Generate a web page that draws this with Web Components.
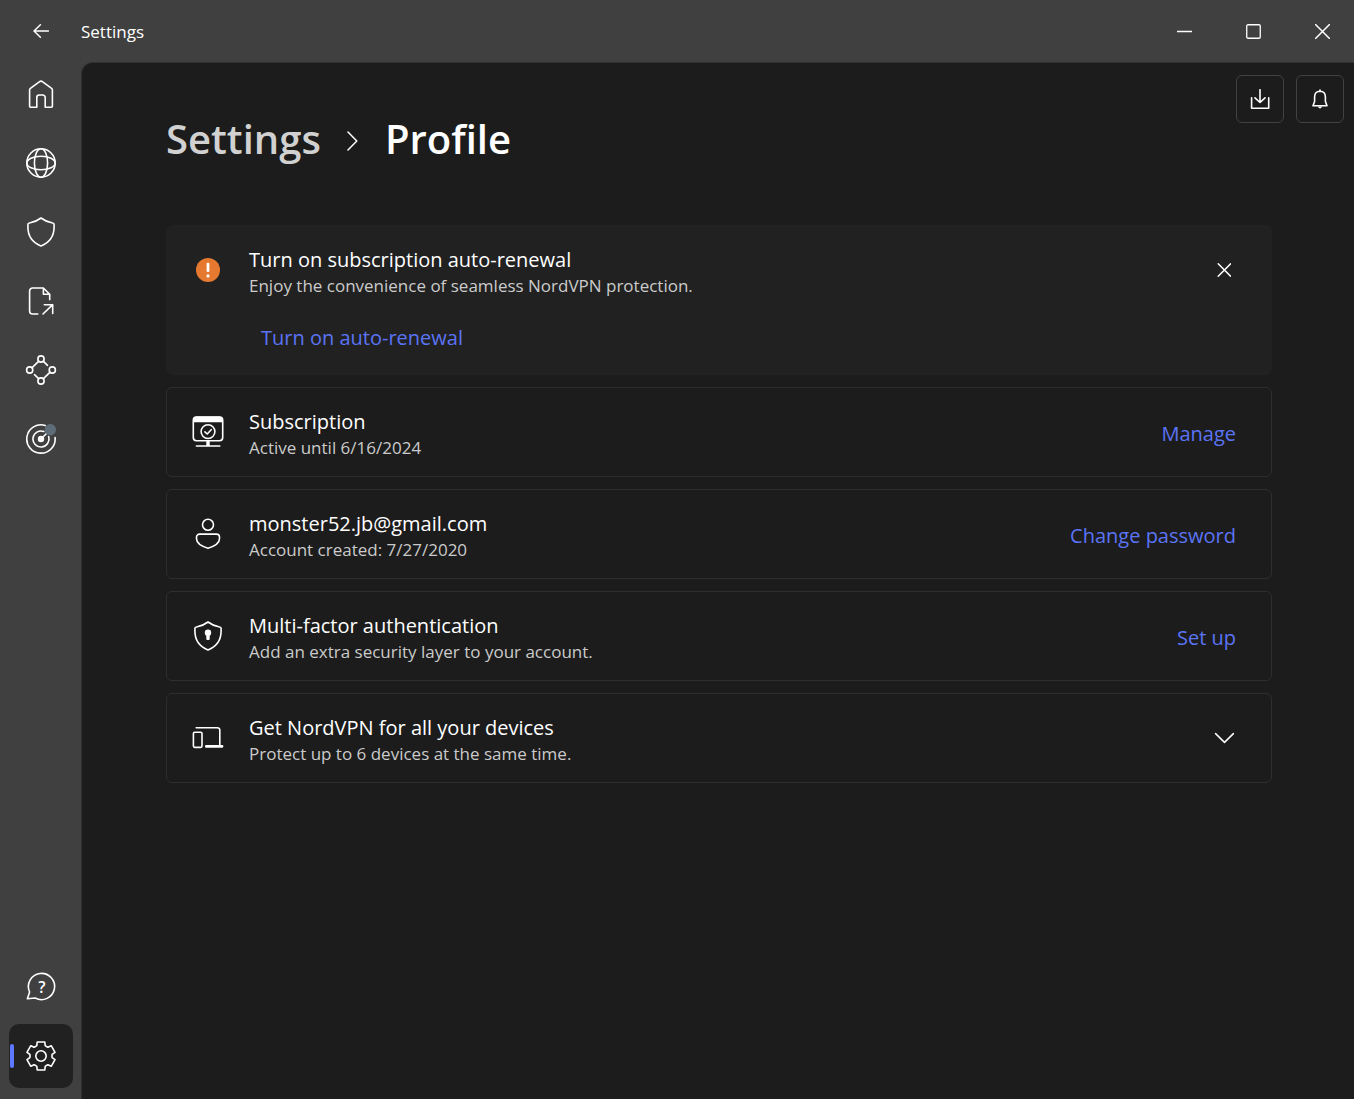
<!DOCTYPE html>
<html lang="en">
<head>
<meta charset="utf-8">
<title>Settings</title>
<style>
  html, body { margin: 0; height: 100%; }
  body {
    --chrome: #404040;
    --surface: #1c1c1c;
    --raised: #212121;
    --line: #2e2e2e;
    --accent: #5b74f5;
    --muted: #cbcbcb;
    background: var(--chrome);
    color: #fff;
    font-family: "Open Sans", "Noto Sans", sans-serif;
    font-size: 20px;
    line-height: 26px;
  }
</style>
</head>
<body>
<app-window>
  <title-bar slot="title">Settings</title-bar>

  <nav-item slot="nav" icon="home" label="Home"></nav-item>
  <nav-item slot="nav" icon="globe" label="Countries"></nav-item>
  <nav-item slot="nav" icon="shield" label="Threat protection"></nav-item>
  <nav-item slot="nav" icon="file" label="File sharing"></nav-item>
  <nav-item slot="nav" icon="mesh" label="Meshnet"></nav-item>
  <nav-item slot="nav" icon="target" label="Dark web monitor"></nav-item>
  <nav-item slot="nav-end" icon="help" label="Help"></nav-item>
  <nav-item slot="nav-end" icon="gear" label="Settings menu" current></nav-item>

  <page-header parent="Settings">Profile
    <tool-button slot="tools" icon="download" label="Downloads"></tool-button>
    <tool-button slot="tools" icon="bell" label="Notifications"></tool-button>
  </page-header>

  <card-list>
    <setting-card icon="warn" filled>
      Turn on subscription auto-renewal
      <span slot="note">Enjoy the convenience of seamless NordVPN protection.</span>
      <glyph-button slot="action" icon="close" label="Dismiss"></glyph-button>
      <link-button slot="footer">Turn on auto-renewal</link-button>
    </setting-card>
    <setting-card icon="subscription">
      Subscription
      <span slot="note">Active until 6/16/2024</span>
      <link-button slot="action">Manage</link-button>
    </setting-card>
    <setting-card icon="user">
      monster52.jb@gmail.com
      <span slot="note">Account created: 7/27/2020</span>
      <link-button slot="action">Change password</link-button>
    </setting-card>
    <setting-card icon="mfa">
      Multi-factor authentication
      <span slot="note">Add an extra security layer to your account.</span>
      <link-button slot="action">Set up</link-button>
    </setting-card>
    <setting-card icon="devices">
      Get NordVPN for all your devices
      <span slot="note">Protect up to 6 devices at the same time.</span>
      <glyph-button slot="action" icon="chevron-down" label="Expand"></glyph-button>
    </setting-card>
  </card-list>
</app-window>

<script>
// Six-tooth cog outline centred on 16,16.
const cog = (() => {
  const tooth = [[-5.6, -9.4], [-4.2, -10.4], [-3.8, -14], [3.8, -14], [4.2, -10.4], [5.6, -9.4]];
  const pts = [];
  for (let i = 0; i < 6; i++) {
    const a = i * Math.PI / 3, c = Math.cos(a), s = Math.sin(a);
    for (const [x, y] of tooth) pts.push((16 + x * c - y * s).toFixed(2) + ' ' + (16 + x * s + y * c).toFixed(2));
  }
  return 'M' + pts.join('L') + 'Z';
})();
const shieldPath = 'M16 2C12.6 4.6 8.4 6.4 4.4 7A1.6 1.6 0 0 0 2.9 8.6V11C2.9 20 8 26.8 16 30C24 26.8 29.1 20 29.1 11V8.6A1.6 1.6 0 0 0 27.6 7C23.6 6.4 19.4 4.6 16 2Z';

const icons = {
  home: [32, 32, '<path d="M5.6 29.2a1 1 0 0 1-1-1V11.9a2 2 0 0 1 .8-1.6L14.6 3.6a2.4 2.4 0 0 1 2.8 0l9.2 6.7a2 2 0 0 1 .8 1.6V28.2a1 1 0 0 1-1 1H20.2V19.5a2.500 2.500 0 0 0-2.500-2.500h-3.400a2.500 2.500 0 0 0-2.500 2.500V29.200Z"/>'],
  globe: [32, 32, '<circle cx="16" cy="16" r="14.2"/><ellipse cx="16" cy="16" rx="6.6" ry="14.2"/><ellipse cx="16" cy="16" rx="14.2" ry="6.8"/>'],
  shield: [32, 32, `<path d="${shieldPath}"/>`],
  file: [32, 32, '<path d="M12.8 29H7.6a3 3 0 0 1-3-3V6a3 3 0 0 1 3-3H18.4L24.7 9.3V14.6M18.4 3V9.3H24.7M18 29L27.7 19.7M19.3 19.7H27.7V28.5"/>'],
  mesh: [32, 32, '<circle cx="16" cy="5" r="3.1"/><circle cx="4.7" cy="16" r="3.1"/><circle cx="27.3" cy="16" r="3.1"/><circle cx="16" cy="27" r="3.1"/><path d="M6.9 13.8L13.8 7.2M18.2 7.2L22.5 11.3M9.5 20.7L13.8 24.8M18.2 24.8L25.1 18.2"/>'],
  target: [32, 32, '<path d="M20.2 2.4A14.2 14.2 0 1 0 30.1 14.6M18.8 8.5A8 8 0 1 0 23.6 13.6M16 16L21.5 10.5"/><circle cx="16" cy="16" r="3.2" fill="currentColor" stroke="none"/><circle cx="25.3" cy="6.7" r="5.7" fill="#5f6d79" stroke="none"/>'],
  help: [32, 32, '<path d="M2.4 27.8L4.6 21A13.1 13.1 0 1 1 10.2 27Z"/><text x="17" y="22" text-anchor="middle" font-size="16" font-weight="600" fill="currentColor" stroke="none">?</text>'],
  gear: [32, 32, `<path d="${cog}"/><circle cx="16" cy="16" r="5.2"/>`],
  download: [20, 20, '<path d="M1.6 8.8V19.2H18.7V8.8M10 .7V13.5M5 8.9L10 13.5L15 8.9"/>'],
  bell: [20, 20, '<path d="M10 1V2.4M10 2.2C6.4 2.2 4.6 4.8 4.6 8V12.5L3 16.8H17L15.4 12.5V8C15.4 4.8 13.6 2.2 10 2.2Z"/><path d="M7.6 17.5H12.4L10.8 19.2H9.2Z" fill="currentColor" stroke="none"/>'],
  close: [14, 14, '<path stroke-width="1.5" d="M1.2 .8L13.6 13.2M13.6 .8L1.2 13.2"/>'],
  'chevron-down': [20, 12, '<path stroke-width="1.5" d="M1.6 1.6L10.5 10.4L19.400 1.600"/>'],
  'chevron-right': [12, 20, '<path stroke-width="1.5" d="M1 1L9.8 10L1 19"/>'],
  back: [16, 14, '<path stroke-width="1.5" d="M15.5 7H1M7.4 .8L1 7L7.4 13.2"/>'],
  minimize: [15, 15, '<path stroke-width="1.5" d="M0 7.500H15"/>'],
  maximize: [15, 15, '<rect x=".75" y=".75" width="13.5" height="13.5" rx="1.2" stroke-width="1.3"/>'],
  exit: [15, 15, '<path stroke-width="1.5" d="M.5 .5L14.5 14.5M14.5 .5L.5 14.5"/>'],
  warn: [24, 24, '<circle cx="12" cy="12" r="12" fill="#e5792f" stroke="none"/><rect x="10.6" y="4.8" width="2.8" height="9.2" rx="1.2" fill="#fff" stroke="none"/><circle cx="12" cy="17.9" r="1.6" fill="#fff" stroke="none"/>'],
  subscription: [32, 32, '<rect x="1.3" y="1" width="29.4" height="23.8" rx="3.2"/><path d="M1 6.3V4A3.5 3.5 0 0 1 4.5 .6H27.5A3.5 3.5 0 0 1 31 4V6.3Z" fill="currentColor" stroke="none"/><circle cx="16" cy="15.6" r="6.9"/><path d="M12.9 15.8L15.2 18L19.2 13.7M4.400 30H27.800"/><path d="M14.300 25H17.700V30H14.300Z" fill="currentColor" stroke="none"/>'],
  user: [32, 32, '<circle cx="16" cy="6.7" r="5.5"/><path d="M7.5 16.1H24.5A3 3 0 0 1 27.5 19.1V20.5C27.5 26 22 28.4 16 30.2C10 28.4 4.5 26 4.5 20.5V19.1A3 3 0 0 1 7.5 16.1Z"/>'],
  mfa: [32, 32, `<path d="${shieldPath}"/><circle cx="16" cy="12.8" r="3.2" fill="currentColor" stroke="none"/><rect x="14.3" y="13" width="3.4" height="7" rx="1" fill="currentColor" stroke="none"/>`],
  devices: [32, 32, '<rect x="1.4" y="10.2" width="8.6" height="15.2" rx="1.3"/><path d="M4.2 5.7H25.4A2.4 2.4 0 0 1 27.8 8.1V24"/><rect x="13" y="22.9" width="18.3" height="2.9" rx="1.2" fill="currentColor" stroke="none"/>'],
};

const define = (name, render) => customElements.define(name, class extends HTMLElement {
  connectedCallback() {
    if (this.shadowRoot) return;
    this.attachShadow({ mode: 'open' }).innerHTML = render(this);
  }
});

const resetButton = 'button{all:unset;box-sizing:border-box;display:flex;align-items:center;justify-content:center;cursor:pointer}button:focus-visible{outline:2px solid var(--accent)}';

define('app-icon', el => {
  const [w, h, body] = icons[el.getAttribute('name')];
  return `<style>:host{display:block;flex:none}svg{display:block}</style>
    <svg width="${w}" height="${h}" viewBox="0 0 ${w} ${h}" fill="none" stroke="currentColor" stroke-width="1.6" stroke-linecap="round" stroke-linejoin="round" aria-hidden="true">${body}</svg>`;
});

define('app-window', () => `
  <style>
    :host { display: grid; grid-template: 62px 1fr / 81px 1fr; min-height: 100vh; }
    header { grid-column: 1 / -1; }
    nav { display: flex; flex-direction: column; justify-content: space-between; padding: 0 8px 11px 9px; }
    .group { display: flex; flex-direction: column; gap: 5px; }
    main { background: var(--surface); border: solid #303030; border-width: 1px 0 0 1px; border-radius: 12px 0 0 0; min-width: 0; }
  </style>
  <header><slot name="title"></slot></header>
  <nav aria-label="Main">
    <div class="group"><slot name="nav"></slot></div>
    <div class="group"><slot name="nav-end"></slot></div>
  </nav>
  <main><slot></slot></main>`);

define('title-bar', () => `
  <style>
    ${resetButton}
    :host { display: flex; align-items: stretch; height: 62px; font-size: 17px; }
    .back { width: 82px; margin-right: -1px; }
    .title { flex: 1; line-height: 64px; }
    .controls { display: flex; gap: 6px; }
    .controls button { width: 63px; }
  </style>
  <button class="back" aria-label="Back"><app-icon name="back"></app-icon></button>
  <span class="title"><slot></slot></span>
  <div class="controls">
    <button aria-label="Minimize"><app-icon name="minimize"></app-icon></button>
    <button aria-label="Maximize"><app-icon name="maximize"></app-icon></button>
    <button aria-label="Close"><app-icon name="exit"></app-icon></button>
  </div>`);

define('nav-item', el => `
  <style>
    ${resetButton}
    :host { display: block; position: relative; }
    button { width: 64px; height: 64px; border-radius: 10px; }
    :host([current]) button { background: var(--raised); }
    :host([current])::before { content: ""; position: absolute; left: 1px; top: 20px; width: 4px; height: 24px; border-radius: 2px; background: #5b78ff; }
  </style>
  <button aria-label="${el.getAttribute('label')}"><app-icon name="${el.getAttribute('icon')}"></app-icon></button>`);

define('page-header', el => `
  <style>
    :host { display: flex; justify-content: space-between; align-items: flex-start; padding: 12px 10px 0 84px; }
    h1 { display: flex; align-items: center; gap: 26px; margin: 36px 0 0; font-size: 40px; line-height: 56px; font-weight: 600; }
    h1 app-icon { padding-top: 4px; }
    a { color: #d1d1d1; text-decoration: none; }
    .tools { display: flex; gap: 12px; }
  </style>
  <h1><a href="#settings">${el.getAttribute('parent')}</a><app-icon name="chevron-right"></app-icon><span><slot></slot></span></h1>
  <div class="tools"><slot name="tools"></slot></div>`);

define('tool-button', el => `
  <style>
    ${resetButton}
    :host { display: block; }
    button { width: 48px; height: 48px; border: 1px solid #424242; border-radius: 6px; }
  </style>
  <button aria-label="${el.getAttribute('label')}"><app-icon name="${el.getAttribute('icon')}"></app-icon></button>`);

define('glyph-button', el => `
  <style>
    ${resetButton}
    :host { display: block; }
    button { width: 48px; height: 48px; }
  </style>
  <button aria-label="${el.getAttribute('label')}"><app-icon name="${el.getAttribute('icon')}"></app-icon></button>`);

define('link-button', () => `
  <style>
    ${resetButton}
    :host { display: block; }
    button { padding: 4px 12px 0; height: 32px; color: var(--accent); }
  </style>
  <button><slot></slot></button>`);

define('card-list', () => `
  <style>:host { display: flex; flex-direction: column; gap: 12px; padding: 58px 82px 40px 84px; }</style>
  <slot></slot>`);

define('setting-card', el => `
  <style>
    :host { display: block; border: 1px solid var(--line); border-radius: 6px; }
    :host([filled]) { background: var(--raised); border-color: var(--raised); }
    .row { display: flex; align-items: center; padding-right: 23px; }
    .icon { display: flex; justify-content: center; width: 82px; }
    .text { flex: 1; padding: 21px 0 15px; }
    h2 { margin: 0; font: inherit; }
    p { margin: 0; font-size: 17px; color: var(--muted); }
    .footer { display: flex; padding: 6px 0 22px 82px; }
    :host(:not([filled])) .footer { display: none; }
  </style>
  <div class="row">
    <div class="icon"><app-icon name="${el.getAttribute('icon')}"></app-icon></div>
    <div class="text"><h2><slot></slot></h2><p><slot name="note"></slot></p></div>
    <slot name="action"></slot>
  </div>
  <div class="footer"><slot name="footer"></slot></div>`);
</script>
</body>
</html>
